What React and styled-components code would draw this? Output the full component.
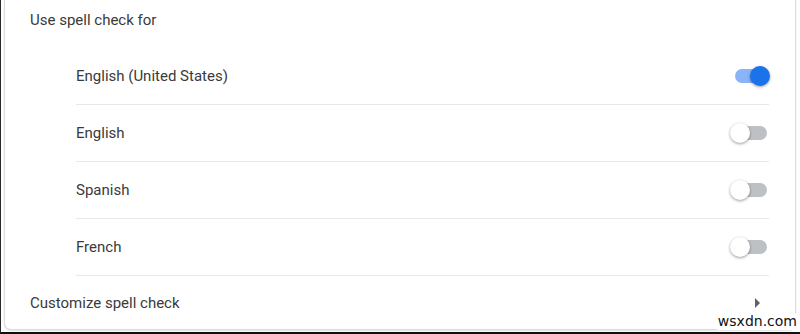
import React from "react";
import styled, { createGlobalStyle } from "styled-components";

const Global = createGlobalStyle`
  html, body { margin: 0; padding: 0; background: #fff; }
  body { font-family: Roboto, "Noto Sans", Arial, sans-serif; }
`;

const Frame = styled.div`
  position: relative;
  width: 800px;
  height: 334px;
  box-sizing: border-box;
  border-left: 1px solid #2a2a2a;
  border-bottom: 2px solid #111;
  padding: 0 4px 2px 3px;
  display: flex;
  background: #fff;
`;

const Card = styled.div`
  flex: 1;
  display: flex;
  flex-direction: column;
  box-sizing: border-box;
  background: #fff;
  border: 1px solid #dcdcdc;
  border-top: none;
  border-radius: 0 0 7px 7px;
  box-shadow: 0 1px 2px rgba(0, 0, 0, 0.12);
`;

const Header = styled.div`
  height: 40px;
  display: flex;
  align-items: center;
  padding-left: 25px;
  font-size: 15px;
  color: #3a3a3a;
`;

const List = styled.div`
  display: flex;
  flex-direction: column;
  padding: 8px 26px 0 71px;
`;

const Row = styled.div`
  height: 56px;
  display: flex;
  align-items: center;
  justify-content: space-between;
  border-bottom: 1px solid #e8e8e8;
  font-size: 15px;
  color: #3a3a3a;
`;

const Track = styled.div`
  position: relative;
  width: 32px;
  height: 14px;
  border-radius: 7px;
  margin-right: 2px;
  background: ${(p) => (p.$on ? "#8ab4f8" : "#bdc1c6")};
`;

const Knob = styled.div`
  position: absolute;
  top: -3px;
  left: ${(p) => (p.$on ? "15px" : "-5px")};
  width: 20px;
  height: 20px;
  border-radius: 50%;
  background: ${(p) => (p.$on ? "#1a73e8" : "#fff")};
  box-shadow: 0 1px 3px rgba(0, 0, 0, 0.4);
`;

const LinkRow = styled.div`
  flex: 1;
  display: flex;
  align-items: center;
  justify-content: space-between;
  padding: 1px 34px 0 25px;
  font-size: 15px;
  color: #3a3a3a;
`;

const Watermark = styled.div`
  position: absolute;
  right: 2px;
  bottom: 2px;
  background: #fff;
  padding: 0 1px;
  font-family: "DejaVu Sans", sans-serif;
  font-size: 14px;
  line-height: 17px;
  color: #111;
`;

const Toggle = ({ on }) => (
  <Track $on={on}>
    <Knob $on={on} />
  </Track>
);

const langs = [
  { name: "English (United States)", on: true },
  { name: "English", on: false },
  { name: "Spanish", on: false },
  { name: "French", on: false },
];

export default function App() {
  return (
    <>
      <Global />
      <Frame>
        <Card>
          <Header>Use spell check for</Header>
          <List>
            {langs.map((l) => (
              <Row key={l.name}>
                <span>{l.name}</span>
                <Toggle on={l.on} />
              </Row>
            ))}
          </List>
          <LinkRow>
            <span>Customize spell check</span>
            <svg width="6" height="10" viewBox="0 0 6 10">
              <path d="M0 0 L5 5 L0 10 Z" fill="#5f6368" />
            </svg>
          </LinkRow>
        </Card>
        <Watermark>wsxdn.com</Watermark>
      </Frame>
    </>
  );
}
